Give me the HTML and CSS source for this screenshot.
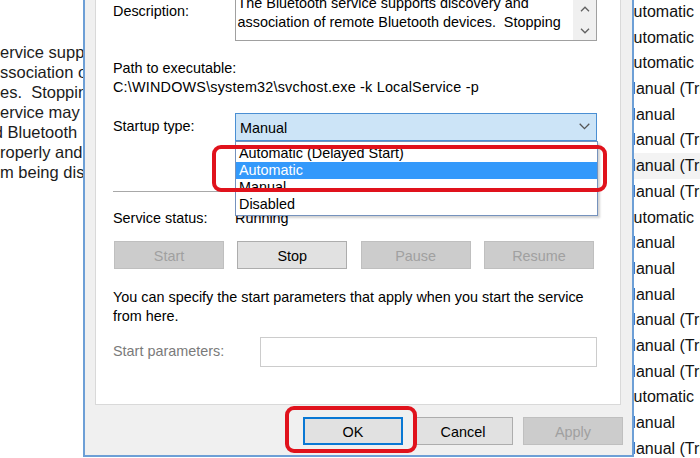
FILE: index.html
```html
<!DOCTYPE html>
<html>
<head>
<meta charset="utf-8">
<title>Bluetooth Support Service Properties</title>
<link rel="stylesheet" href="styles.css">
</head>
<body>
<div class="screen">
  <div class="bg-left">
    <div class="bl">ervice supp</div>
    <div class="bl">ssociation o</div>
    <div class="bl">es.&nbsp; Stoppin</div>
    <div class="bl">ervice may c</div>
    <div class="bl clip-d">d Bluetooth</div>
    <div class="bl">roperly and</div>
    <div class="bl">m being dis</div>
  </div>

  <div class="dialog">
    <div class="page">
      <div class="desc-row">
        <div class="label desc-label">Description:</div>
        <div class="desc-box">
          <div class="desc-text">The Bluetooth service supports discovery and<br>association of remote Bluetooth devices.&nbsp; Stopping</div>
          <div class="scrollbar">
            <div class="sb-btn"><svg width="10" height="6" viewBox="0 0 10 6"><path d="M1 5.2 L5 1.2 L9 5.2" fill="none" stroke="#606060" stroke-width="1.3"/></svg></div>
            <div class="sb-btn"><svg width="10" height="6" viewBox="0 0 10 6"><path d="M1 0.8 L5 4.8 L9 0.8" fill="none" stroke="#606060" stroke-width="1.3"/></svg></div>
          </div>
        </div>
      </div>

      <div class="path">
        <div>Path to executable:</div>
        <div class="path-value">C:\WINDOWS\system32\svchost.exe -k LocalService -p</div>
      </div>

      <div class="startup-row">
        <div class="label startup-label">Startup type:</div>
        <div class="combo-wrap">
          <div class="combo">
            <span>Manual</span>
            <svg class="chev" width="11" height="7" viewBox="0 0 11 7"><path d="M0.7 0.8 L5.5 5.6 L10.3 0.8" fill="none" stroke="#555" stroke-width="1.3"/></svg>
          </div>
          <div class="dropdown">
            <div class="opt">Automatic (Delayed Start)</div>
            <div class="opt sel">Automatic</div>
            <div class="opt">Manual</div>
            <div class="opt">Disabled</div>
          </div>
          <div class="mark mark-list"></div>
        </div>
      </div>

      <div class="sep"></div>

      <div class="status-row">
        <div class="label">Service status:</div>
        <div>Running</div>
      </div>

      <div class="btn-row">
        <div class="btn disabled">Start</div>
        <div class="btn">Stop</div>
        <div class="btn disabled">Pause</div>
        <div class="btn disabled">Resume</div>
      </div>

      <p class="info">You can specify the start parameters that apply when you start the service<br>from here.</p>

      <div class="params-row">
        <div class="label muted params-label">Start parameters:</div>
        <div class="input"></div>
      </div>
    </div>

    <div class="footer">
      <div class="ok-wrap">
        <div class="btn fbtn default">OK</div>
        <div class="mark mark-ok"></div>
      </div>
      <div class="btn fbtn">Cancel</div>
      <div class="btn fbtn disabled">Apply</div>
    </div>
  </div>

  <div class="bg-right">
    <div class="rr auto">Automatic</div>
    <div class="rr auto">Automatic</div>
    <div class="rr auto">Automatic</div>
    <div class="rr man">Manual (Trigger Start)</div>
    <div class="rr man">Manual</div>
    <div class="rr man">Manual (Trigger Start)</div>
    <div class="rr man hover">Manual (Trigger Start)</div>
    <div class="rr man">Manual (Trigger Start)</div>
    <div class="rr auto">Automatic</div>
    <div class="rr man">Manual</div>
    <div class="rr man">Manual</div>
    <div class="rr man">Manual</div>
    <div class="rr man">Manual (Trigger Start)</div>
    <div class="rr man">Manual (Trigger Start)</div>
    <div class="rr man">Manual (Trigger Start)</div>
    <div class="rr auto">Automatic</div>
    <div class="rr man">Manual</div>
    <div class="rr man">Manual (Trigger Start)</div>
  </div>
</div>
</body>
</html>
```

FILE: styles.css
```css
* { box-sizing: border-box; }

html, body {
  margin: 0;
  padding: 0;
}

body {
  width: 700px;
  height: 458px;
  overflow: hidden;
  background: #ffffff;
  font-family: "Liberation Sans", Arial, sans-serif;
  color: #000;
}

.screen {
  display: flex;
  width: 700px;
  height: 458px;
  overflow: hidden;
}

/* background window text on the left */
.bg-left {
  flex: none;
  width: 83px;
  padding-top: 42.4px;
  overflow: hidden;
  white-space: nowrap;
  font-size: 16.5px;
  line-height: 20px;
  color: #1c1c1c;
}

.clip-d { text-indent: -6.3px; }

/* dialog */
.dialog {
  flex: none;
  width: 551px;
  height: 457px;
  background: #f0f0f0;
  border-left: 2px solid #6d9fd6;
  border-right: 2px solid #6d9fd6;
  border-bottom: 2px solid #6d9fd6;
  display: flex;
  flex-direction: column;
}

.page {
  margin: -2px 11px 0 10px;
  background: #fff;
  border: 1px solid #d9d9d9;
  padding: 0 22px 37px 17px;
  font-size: 14.4px;
  line-height: 18.4px;
}

.label { white-space: nowrap; }

.desc-row {
  display: grid;
  grid-template-columns: 122px 362px;
}

.desc-label { margin-top: 2.8px; }

.desc-box {
  height: 42px;
  border: 1px solid #a0a0a0;
  display: flex;
  overflow: hidden;
}

.desc-text {
  flex: 1;
  padding-left: 1.5px;
  margin-top: -5.9px;
  white-space: nowrap;
  overflow: hidden;
}

.scrollbar {
  flex: none;
  width: 23px;
  background: #f0f0f0;
  display: flex;
  flex-direction: column;
  gap: 5px;
}

.sb-btn {
  height: 17px;
  display: flex;
  align-items: center;
  justify-content: center;
}

.path {
  margin-top: 17.8px;
  line-height: 19px;
  white-space: nowrap;
}

.path-value { letter-spacing: 0.2px; }

.startup-row {
  margin-top: 16.2px;
  display: grid;
  grid-template-columns: 122px 362px;
}

.startup-label { margin-top: 4.5px; }

.combo-wrap { position: relative; }

.combo {
  height: 28px;
  border: 1px solid #4a8fd3;
  background: #cce4f7;
  padding: 5px 6px 0 4px;
  display: flex;
  align-items: flex-start;
}

.chev {
  margin-left: auto;
  margin-top: 4px;
}

.dropdown {
  position: absolute;
  left: 0;
  top: 28px;
  width: 363px;
  background: #fff;
  border: 1px solid #7592bd;
  padding: 3.5px 0 1.5px 0;
  box-shadow: 2px 2px 2px rgba(0, 0, 0, 0.18);
  z-index: 5;
}

.opt {
  height: 17px;
  line-height: 17px;
  padding-left: 3px;
  white-space: nowrap;
}

.opt.sel {
  background: #3399fb;
  color: #fff;
}

.mark {
  position: absolute;
  border: 4px solid #e0121c;
  border-radius: 9px;
  z-index: 10;
  pointer-events: none;
}

.mark-list {
  left: -23px;
  top: 32px;
  width: 395px;
  height: 47px;
}

.sep {
  margin-top: 50px;
  height: 1px;
  background: #a8a8a8;
}

.status-row {
  margin-top: 17px;
  display: grid;
  grid-template-columns: 122px 362px;
}

.btn-row {
  margin-top: 13.6px;
  margin-left: 1px;
  display: flex;
  gap: 13.33px;
}

.btn {
  width: 110px;
  height: 28px;
  border: 1px solid #adadad;
  background: #e1e1e1;
  padding-top: 5px;
  line-height: 18.4px;
  text-align: center;
  color: #000;
}

.btn.disabled {
  background: #cccccc;
  border-color: #bfbfbf;
  color: #a0a0a0;
}

.info {
  margin: 19.4px 0 0 0;
  white-space: nowrap;
}

.params-row {
  margin-top: 11.8px;
  display: grid;
  grid-template-columns: 147px 337px;
}

.params-label { margin-top: 5.5px; }

.muted { color: #7a7a7a; }

.input {
  height: 30px;
  border: 1px solid #cccccc;
  background: #fff;
}

/* footer buttons */
.footer {
  height: 50px;
  padding: 12px 9px 10px 0;
  display: flex;
  justify-content: flex-end;
  gap: 10px;
  font-size: 14.4px;
}

.fbtn { width: 100px; }

.ok-wrap { position: relative; }

.btn.default {
  border: 2px solid #0a78d4;
  padding-top: 4px;
}

.mark-ok {
  left: -18px;
  top: -11px;
  width: 132px;
  height: 47px;
}

/* background list on the right */
.bg-right {
  flex: none;
  width: 66px;
  overflow: hidden;
  white-space: nowrap;
  font-size: 16px;
  margin-top: -1px;
}

.rr {
  height: 25.7px;
  line-height: 25.7px;
  color: #111;
}

.rr.hover { background: #f3f3f3; }

.rr.auto { text-indent: -11.1px; }
.rr.man { text-indent: -11.4px; }
```
